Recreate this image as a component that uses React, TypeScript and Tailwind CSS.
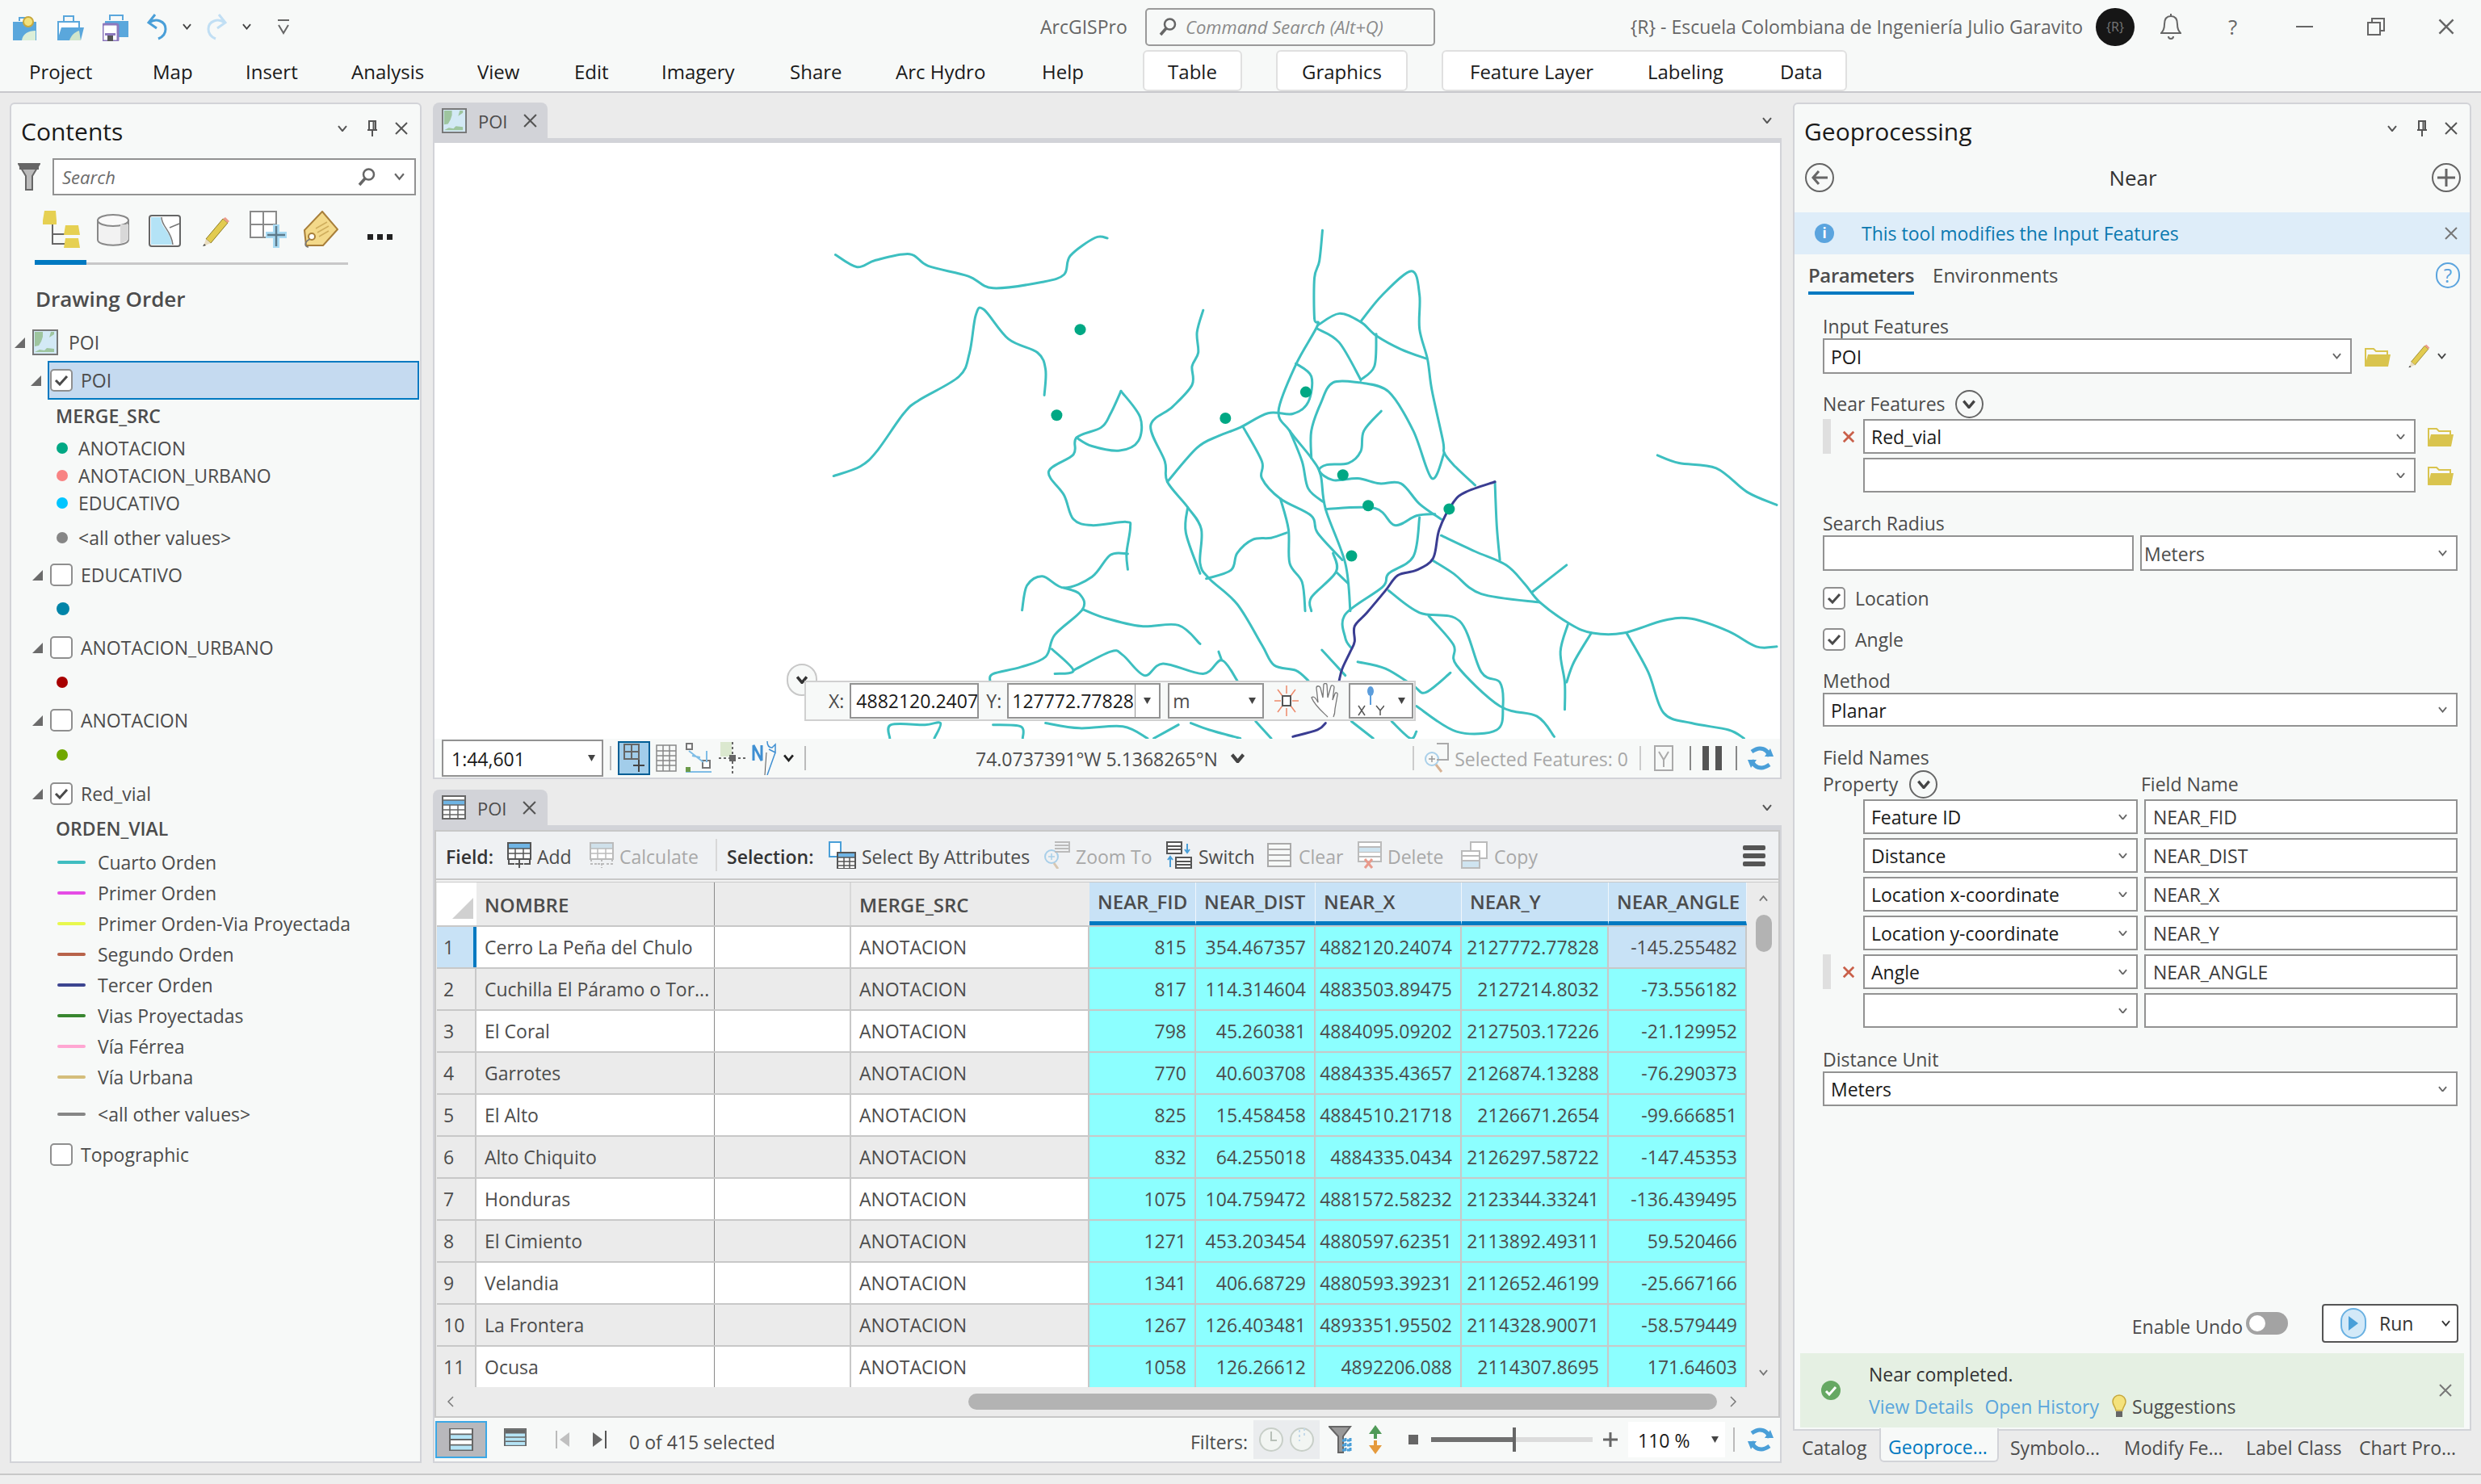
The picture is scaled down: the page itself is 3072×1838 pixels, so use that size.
import React from 'react';

// traced from the map, in crop coordinates (see toX / toY)
const ROADS: number[][] = [
  [45,132,80,168,110,148,165,130,195,165,260,195,300,230,380,212,415,190,425,135,465,82,485,83],
  [42,783,85,755,112,710,155,600,180,560,245,490,262,420,272,310,285,293,325,380,372,420,385,470,383,545],
  [640,295,630,360,632,420,622,460,622,515,590,580,555,635,578,740,582,800,615,875,637,940,635,1040,650,1085,695,1160,735,1280,755,1340,790,1355,810,1385],
  [507,533,490,600,475,640,435,670,430,720,390,770,415,840,430,910,460,928,515,918,522,935,516,1010,518,1058],
  [435,670,460,695,505,708,535,680,538,610,507,533],
  [582,800,630,700,665,665,700,640,745,598,785,600,810,565,815,490,790,452],
  [833,60,828,150,820,200,820,320,825,340,790,455,762,590,780,650,815,730,830,780,838,880,870,1040,878,1180],
  [825,340,860,305,895,330,920,370,960,410,1000,437],
  [895,328,930,250,977,180,990,250,990,350,1003,440,1010,530,1028,680,1030,715,1045,750,1080,810],
  [825,350,860,390,895,500],
  [920,365,917,460,895,500],
  [895,508,850,508,830,570,815,650,815,730],
  [895,508,940,535,980,650,1010,790,1030,715],
  [928,592,900,650,895,710,875,745,840,750,828,768,850,795,890,790,925,805,960,805,990,865,1025,910],
  [780,650,800,740,810,820,835,860],
  [705,640,735,740,735,790,765,850,815,900,825,950,865,1030],
  [765,850,778,940,780,1040,800,1095,805,1180],
  [838,880,918,878,950,928,985,900,1015,895],
  [990,905,980,1020,940,1070,930,1110,870,1190,870,1260,880,1290],
  [775,950,750,965,720,970,695,1010,685,1060,645,1085],
  [615,875,612,950,635,1070],
  [850,1010,855,1065,815,1140,815,1180],
  [855,1065,875,1100],
  [1112,800,1115,930,1120,1030],
  [1025,958,1080,1005,1130,1045,1160,1100,1185,1155,1235,1220,1270,1245,1320,1245,1385,1208,1430,1203,1490,1240,1535,1285,1568,1285],
  [1375,722,1410,745,1470,760,1520,830,1568,868],
  [1010,1030,1045,1070,1090,1130,1185,1155],
  [1172,1125,1228,1045],
  [940,1120,990,1185,1055,1210,1090,1360,1120,1390,1125,1460,1115,1530,1050,1535,985,1460],
  [1005,1195,1045,1280,1050,1340,1120,1460,1180,1490,1208,1550],
  [1230,1220,1218,1300,1225,1390,1225,1470],
  [1268,1245,1240,1330,1228,1390],
  [1325,1245,1360,1360,1385,1480,1430,1510,1490,1530,1515,1555],
  [518,1012,490,1015,460,1080,415,1112,380,1078,355,1105,347,1178],
  [415,1112,440,1130,445,1175,400,1250,385,1315,345,1345,300,1365,295,1385],
  [445,1175,480,1200,540,1225,600,1222,635,1277],
  [395,1292,430,1355,400,1365],
  [430,1355,490,1300,510,1310,545,1370,575,1335,640,1365,670,1325,695,1385],
  [665,1300,670,1325],
  [832,1295,870,1370],
  [890,1330,935,1350,980,1400,1000,1420,1040,1362],
  [133,1555,135,1515,190,1515,215,1510,205,1555],
  [300,1515,345,1520,348,1555],
  [385,1510,440,1525,510,1520,550,1555],
  [600,1515,560,1555],
  [620,1510,650,1530,700,1555],
  [725,1505,750,1555],
  [880,1505,915,1555],
  [945,1505,975,1555,985,1535],
];
const MAIN_ROAD: number[][] = [
  [1112,800,1065,830,1045,860,1022,940,1012,1025,985,1060,955,1075,935,1120,905,1185,885,1225,885,1270,878,1300,865,1350,860,1385],
  [838,1510,825,1530,785,1550],
];
const POINTS = [[441,352],[403,604],[676,613],[806,536],[866,780],[907,870],[1038,880],[880,1018]];

const toX = (x: number) => 1000 + x * 0.7653;
const toY = (y: number) => 260 + y * 0.4209;

function smooth(flat: number[]) {
  const pts: [number, number][] = [];
  for (let i = 0; i < flat.length; i += 2) pts.push([toX(flat[i]), toY(flat[i + 1])]);
  let d = `M${pts[0][0]} ${pts[0][1]}`;
  for (let i = 0; i < pts.length - 1; i++) {
    const a = pts[Math.max(i - 1, 0)], b = pts[i], c = pts[i + 1], e = pts[Math.min(i + 2, pts.length - 1)];
    d += `C${b[0] + (c[0] - a[0]) / 6} ${b[1] + (c[1] - a[1]) / 6} ${c[0] - (e[0] - b[0]) / 6} ${c[1] - (e[1] - b[1]) / 6} ${c[0]} ${c[1]}`;
  }
  return d;
}

const ROWS = [
  ['Cerro La Peña del Chulo', '815', '354.467357', '4882120.24074', '2127772.77828', '-145.255482'],
  ['Cuchilla El Páramo o Tor...', '817', '114.314604', '4883503.89475', '2127214.8032', '-73.556182'],
  ['El Coral', '798', '45.260381', '4884095.09202', '2127503.17226', '-21.129952'],
  ['Garrotes', '770', '40.603708', '4884335.43657', '2126874.13288', '-76.290373'],
  ['El Alto', '825', '15.458458', '4884510.21718', '2126671.2654', '-99.666851'],
  ['Alto Chiquito', '832', '64.255018', '4884335.0434', '2126297.58722', '-147.45353'],
  ['Honduras', '1075', '104.759472', '4881572.58232', '2123344.33241', '-136.439495'],
  ['El Cimiento', '1271', '453.203454', '4880597.62351', '2113892.49311', '59.520466'],
  ['Velandia', '1341', '406.68729', '4880593.39231', '2112652.46199', '-25.667166'],
  ['La Frontera', '1267', '126.403481', '4893351.95502', '2114328.90071', '-58.579449'],
  ['Ocusa', '1058', '126.26612', '4892206.088', '2114307.8695', '171.64603'],
];

const GRID = 'grid grid-cols-[49px_295px_169px_295px_132px_148px_181px_182px_171px]';

function Chev({ size = 12, color = '#555', width = 2 }: { size?: number; color?: string; width?: number }) {
  return (
    <svg width={size} height={size * 0.7} viewBox="0 0 12 8" className="shrink-0">
      <path d="M1 1l5 6 5-6" fill="none" stroke={color} strokeWidth={width} />
    </svg>
  );
}

function CloseX({ size = 18, color = '#555', width = 2 }: { size?: number; color?: string; width?: number }) {
  return (
    <svg width={size} height={size} viewBox="0 0 18 18" className="shrink-0">
      <path d="M2 2l14 14M16 2L2 16" stroke={color} strokeWidth={width} fill="none" />
    </svg>
  );
}

function Pin() {
  return (
    <svg width="14" height="20" viewBox="0 0 14 20" className="shrink-0">
      <path d="M3 1h8v11H3zM1 12h12M7 12v8M8.5 2v9" stroke="#555" strokeWidth="2" fill="none" />
    </svg>
  );
}

function PaneControls({ className = '' }: { className?: string }) {
  return (
    <div className={`flex items-center ${className}`}>
      <Chev />
      <div className="ml-[24px]"><Pin /></div>
      <div className="ml-[20px]"><CloseX /></div>
    </div>
  );
}

function Magnifier({ size = 24, color = '#666' }: { size?: number; color?: string }) {
  return (
    <svg width={size} height={size} viewBox="0 0 24 24" className="shrink-0">
      <circle cx="14.5" cy="9" r="6.5" fill="none" stroke={color} strokeWidth="2.5" />
      <path d="M10 14L3 22" stroke={color} strokeWidth="3.5" />
    </svg>
  );
}

function Folder() {
  return (
    <svg width="33" height="25" viewBox="0 0 33 25" className="shrink-0">
      <path d="M2 24V3h10l3 3h14v4" fill="none" stroke="#d9c44e" strokeWidth="2" />
      <path d="M1 25L5 10h28l-3 15z" fill="#d9c44e" />
    </svg>
  );
}

function Pencil({ size = 38 }: { size?: number }) {
  return (
    <svg width={size} height={size} viewBox="0 0 38 38" className="shrink-0">
      <path d="M7 28L28 3l6 5-21 25z" fill="#e2cb50" stroke="#8d7d25" strokeWidth="1" />
      <path d="M28 3l3-2 5 5-2 2z" fill="#ec9d8c" />
      <path d="M7 28l6 5-9 4z" fill="#e8dcc0" />
      <path d="M3 37l2-3 2 2z" fill="#444" />
    </svg>
  );
}

function Check({ size = 28 }: { size?: number }) {
  return (
    <div className="flex items-center justify-center rounded-[5px] border-2 border-[#8f8f8f] bg-white shrink-0" style={{ width: size, height: size }}>
      <svg width="18" height="14" viewBox="0 0 18 14">
        <path d="M2 7l5 5 9-10" fill="none" stroke="#4a4a4a" strokeWidth="3" />
      </svg>
    </div>
  );
}

function Empty() {
  return <div className="w-[28px] h-[28px] rounded-[5px] border-2 border-[#8f8f8f] bg-white shrink-0" />;
}

function Tri({ color = '#6b6b6b', size = 13 }: { color?: string; size?: number }) {
  return (
    <svg width={size} height={size} viewBox="0 0 13 13" className="shrink-0">
      <polygon points="13,0 13,13 0,13" fill={color} />
    </svg>
  );
}

function MapThumb({ w = 32, h = 32 }: { w?: number; h?: number }) {
  return (
    <svg width={w} height={h} viewBox="0 0 32 32" className="shrink-0">
      <rect x="1" y="1" width="30" height="30" fill="#d3e9f5" stroke="#777" strokeWidth="2" />
      <path d="M3 3h10v6l-2 6-3 5-5 1zM27 3v3l-6 4 2-7zM3 28l6-3 6 1 3-3 9 1v4z" fill="#9ec59f" />
    </svg>
  );
}

function TableGlyph({ size = 30, top = '#6fb4e4', line = '#666' }: { size?: number; top?: string; line?: string }) {
  return (
    <svg width={size} height={size} viewBox="0 0 30 30" className="shrink-0">
      <rect x="1" y="1" width="28" height="28" fill="#fff" stroke={line} strokeWidth="2" />
      <rect x="2" y="6" width="26" height="6" fill={top} />
      <path d="M2 6h26M2 12h26M2 18h26M2 24h26M10 12v17M20 12v17" stroke={line} strokeWidth="1.5" />
    </svg>
  );
}

function AddFieldIcon({ disabled = false }: { disabled?: boolean }) {
  const line = disabled ? '#bbb' : '#555';
  return (
    <svg width="30" height="32" viewBox="0 0 30 32" className="shrink-0">
      <rect x="1" y="1" width="28" height="20" fill="#fff" stroke={line} strokeWidth="2" />
      <rect x="2" y="2" width="26" height="6" fill={disabled ? '#cfe0ea' : '#6fb4e4'} />
      <path d="M2 8h26M2 14h26M10 8v13M20 8v13" stroke={line} strokeWidth="1.5" />
      <path d="M2 21v6h7M28 21v6h-7M15 21v11M10 27h10" stroke={line} strokeWidth="2" strokeDasharray={disabled ? '3 2' : undefined} fill="none" />
    </svg>
  );
}

function SelectAttrIcon() {
  return (
    <svg width="34" height="34" viewBox="0 0 34 34" className="shrink-0">
      <path d="M1 1h14v18H1z" fill="#fff" stroke="#4a9fd8" strokeWidth="2" />
      <rect x="11" y="14" width="22" height="20" fill="#fff" stroke="#555" strokeWidth="2" />
      <rect x="12" y="15" width="20" height="5" fill="#6fb4e4" />
      <path d="M12 20h20M12 25h20M12 30h20M19 20v14M26 20v14" stroke="#555" strokeWidth="1.5" />
    </svg>
  );
}

function ZoomToIcon() {
  return (
    <svg width="32" height="34" viewBox="0 0 32 34" className="shrink-0">
      <circle cx="9" cy="19" r="8" fill="none" stroke="#a8cfe9" strokeWidth="2" />
      <path d="M5 19h8M9 15v8" stroke="#a8cfe9" strokeWidth="1.5" />
      <path d="M12 27l5 7" stroke="#d7c7b2" strokeWidth="3" />
      <path d="M13 1h18v12H13M13 5h18M13 9h18" fill="none" stroke="#bbb" strokeWidth="2" />
    </svg>
  );
}

function SwitchIcon() {
  return (
    <svg width="34" height="34" viewBox="0 0 34 34" className="shrink-0">
      <path d="M2 1h18v14H2zM2 6h18M2 10h18" fill="#fff" stroke="#555" strokeWidth="2" />
      <path d="M13 20h19v13H13zM13 25h19M13 29h19" fill="#fff" stroke="#555" strokeWidth="2" />
      <path d="M27 3v10M24 10l3 4 3-4M6 20v12M3 23l3-4 3 4" fill="none" stroke="#4a9fd8" strokeWidth="2" />
    </svg>
  );
}

function DeleteIcon() {
  return (
    <svg width="30" height="34" viewBox="0 0 30 34" className="shrink-0">
      <path d="M1 1h28v24H1zM1 7h28M1 13h28M1 19h28" fill="#fff" stroke="#bbb" strokeWidth="2" />
      <rect x="2" y="8" width="26" height="5" fill="#cfe4f0" />
      <path d="M9 22l9 11M18 22L9 33" stroke="#e89a8c" strokeWidth="3" />
    </svg>
  );
}

function CopyIcon() {
  return (
    <svg width="34" height="34" viewBox="0 0 34 34" className="shrink-0">
      <path d="M12 1h20v20H12z" fill="#fff" stroke="#bbb" strokeWidth="2" />
      <path d="M1 12h22v21H1z" fill="#fff" stroke="#bbb" strokeWidth="2" />
      <path d="M2 18h20M2 24h20" stroke="#bbb" strokeWidth="2" />
      <rect x="2" y="25" width="20" height="7" fill="#cfe4f0" />
    </svg>
  );
}

function Dropdown({ text, className, dark = true }: { text?: string; className: string; dark?: boolean }) {
  return (
    <div className={`flex items-center justify-between border-2 border-[#929292] bg-white pl-[8px] pr-[11px] text-[23px] ${dark ? 'text-[#1a1a1a]' : 'text-[#4c4c4c]'} ${className}`}>
      <span className="pt-[2px]">{text}</span>
      <Chev size={11} color="#666" />
    </div>
  );
}

function TextBox({ text, className }: { text?: string; className: string }) {
  return <div className={`flex items-center border-2 border-[#929292] bg-white pl-[9px] pt-[2px] text-[23px] text-[#3c3c3c] ${className}`}>{text}</div>;
}

function Label({ text, className = '' }: { text: string; className?: string }) {
  return <div className={`h-[30px] flex items-center text-[23px] text-[#4c4c4c] ${className}`}>{text}</div>;
}

function CircleChev({ className = 'ml-[14px]' }: { className?: string }) {
  return (
    <div className={`w-[35px] h-[35px] rounded-full border-2 border-[#666] flex items-center justify-center ${className}`}>
      <Chev size={16} color="#444" width={2.5} />
    </div>
  );
}

function Swatch({ color }: { color: string }) {
  return <span className="block w-[14px] h-[14px] rounded-full shrink-0" style={{ background: color }} />;
}

function Legend({ color, label, className }: { color: string; label: string; className: string }) {
  return (
    <div className={`flex items-center pl-[56px] ${className}`}>
      <Swatch color={color} />
      <span className="ml-[13px]">{label}</span>
    </div>
  );
}

function LineItem({ color, label, className = 'h-[38px]' }: { color: string; label: string; className?: string }) {
  return (
    <div className={`flex items-center pl-[57px] ${className}`}>
      <span className="block w-[35px] h-[4px] rounded-full shrink-0" style={{ background: color }} />
      <span className="ml-[15px]">{label}</span>
    </div>
  );
}

function Layer({ label, checked = false }: { label: string; checked?: boolean }) {
  return (
    <div className="h-[40px] flex items-center pl-[26px]">
      <Tri />
      <div className="ml-[9px]">{checked ? <Check /> : <Empty />}</div>
      <span className="ml-[10px]">{label}</span>
    </div>
  );
}

function ContentsPane() {
  return (
    <div className="w-[510px] h-full flex flex-col rounded-t-[6px] border-x-2 border-t-2 border-b-2 border-[#d2d3d8] bg-[#f7f9f8] text-[23px] text-[#4c4c4c]">
      <div className="h-[64px] shrink-0 flex items-center justify-between pl-[12px] pr-[14px]">
        <span className="text-[30px] text-[#1a1a1a] pt-[2px]">Contents</span>
        <PaneControls className="pb-[4px]" />
      </div>
      <div className="h-[52px] shrink-0 flex items-center pl-[8px]">
        <svg width="28" height="34" viewBox="0 0 28 34" className="shrink-0">
          <path d="M1 1h26l-9 15v17h-8V16z" fill="#bbb" stroke="#666" strokeWidth="2" />
          <rect x="2" y="2" width="24" height="6" fill="#666" />
        </svg>
        <div className="ml-[15px] w-[450px] h-[46px] border-2 border-[#929292] bg-white flex items-center pl-[10px] pr-[12px]">
          <span className="italic text-[22px] text-[#6b6b6b]">Search</span>
          <div className="ml-auto"><Magnifier size={24} /></div>
          <div className="ml-[22px]"><Chev size={13} color="#666" /></div>
        </div>
      </div>
      <div className="h-[64px] shrink-0 flex items-end pl-[39px] pb-[2px]">
        <svg width="46" height="46" viewBox="0 0 46 46" className="shrink-0">
          <path d="M12 16v25h20M12 29h20" fill="none" stroke="#666" strokeWidth="2" />
          <path d="M2 0h14l1 12H0zM0 12h17v5H0zM28 18h16l2 12H26zM28 34h16l2 12H26z" fill="#e6d052" />
        </svg>
        <svg width="42" height="42" viewBox="0 0 42 42" className="ml-[20px] shrink-0 mb-[1px]">
          <path d="M2 9v24c0 9 38 9 38 0V9z" fill="#f2f2f2" stroke="#888" strokeWidth="2" />
          <ellipse cx="21" cy="9" rx="19" ry="7" fill="#f9f9f9" stroke="#888" strokeWidth="2" />
          <path d="M30 14h10v19l-10 5z" fill="#d8d8d8" />
        </svg>
        <svg width="40" height="40" viewBox="0 0 40 40" className="ml-[23px] shrink-0 mb-[1px]">
          <rect x="1" y="1" width="38" height="38" rx="3" fill="#fff" stroke="#666" strokeWidth="2" />
          <path d="M3 3h12c0 14 12 16 14 34H3z" fill="#b4e3f6" />
          <path d="M16 3c0 12 12 16 14 34M26 16l12-5" fill="none" stroke="#777" strokeWidth="1.5" />
        </svg>
        <div className="ml-[24px] mb-[1px]"><Pencil /></div>
        <svg width="46" height="46" viewBox="0 0 46 46" className="ml-[23px] shrink-0">
          <path d="M1 1h32v32H1zM1 17h32M17 1v32" fill="#fff" stroke="#8a8a8a" strokeWidth="2" />
          <rect x="20" y="26" width="26" height="8" fill="#a8daf3" />
          <rect x="29" y="17" width="8" height="29" fill="#a8daf3" />
          <path d="M22 30h22M33 19v25" stroke="#5d7a8a" strokeWidth="2.5" />
        </svg>
        <svg width="44" height="46" viewBox="0 0 44 46" className="ml-[20px] shrink-0">
          <path d="M24 1l19 22-18 20H4L2 24z" fill="#f3d98a" stroke="#a87f3a" strokeWidth="2" />
          <path d="M16 22l14-8M18 27l14-8M20 32l12-7" stroke="#cfae5d" strokeWidth="1.5" />
          <circle cx="11" cy="32" r="4" fill="#fff" stroke="#a87f3a" strokeWidth="2" />
          <path d="M9 35c-8 4-7 10-2 10" fill="none" stroke="#777" strokeWidth="1.5" />
        </svg>
        <div className="ml-[36px] mb-[10px] flex gap-[5px]">
          <span className="block w-[7px] h-[7px] bg-[#222]" />
          <span className="block w-[7px] h-[7px] bg-[#222]" />
          <span className="block w-[7px] h-[7px] bg-[#222]" />
        </div>
      </div>
      <div className="ml-[29px] mt-[13px] w-[388px] h-[6px] shrink-0 flex items-end bg-gradient-to-b from-transparent from-50% to-[#c8c8c8] to-50%">
        <span className="block w-[64px] h-[6px] bg-[#0079c1]" />
      </div>
      <div className="mt-[27px] h-[30px] pl-[30px] flex items-center text-[26px] font-semibold text-[#4c4c4c]">Drawing Order</div>

      <div className="mt-[22px] h-[34px] flex items-center pl-[4px]">
        <div className="flex items-center"><Tri /></div>
        <div className="ml-[9px]"><MapThumb /></div>
        <span className="ml-[13px]">POI</span>
      </div>
      <div className="mt-[6px] h-[48px] flex items-center pl-[24px]">
        <Tri />
        <div className="ml-[8px] w-[460px] h-[48px] bg-[#c5daf0] border-2 border-[#0079c1] flex items-center pl-[1px]">
          <Check />
          <span className="ml-[10px]">POI</span>
        </div>
      </div>
      <div className="mt-[4px] h-[32px] flex items-center pl-[55px] font-semibold">MERGE_SRC</div>
      <Legend color="#00a884" label="ANOTACION" className="mt-[7px] h-[34px]" />
      <Legend color="#f88383" label="ANOTACION_URBANO" className="h-[34px]" />
      <Legend color="#00c5ff" label="EDUCATIVO" className="h-[34px]" />
      <Legend color="#868686" label="<all other values>" className="mt-[9px] h-[34px]" />
      <div className="mt-[9px]"><Layer label="EDUCATIVO" /></div>
      <div className="h-[44px] flex items-center pl-[56px]"><span className="block w-[16px] h-[16px] rounded-full bg-[#0084a8]" /></div>
      <div className="mt-[6px]"><Layer label="ANOTACION_URBANO" /></div>
      <div className="h-[46px] flex items-center pl-[56px]"><Swatch color="#a80000" /></div>
      <div className="mt-[4px]"><Layer label="ANOTACION" /></div>
      <div className="h-[46px] flex items-center pl-[56px]"><Swatch color="#70a800" /></div>
      <div className="mt-[5px]"><Layer label="Red_vial" checked /></div>
      <div className="mt-[2px] h-[42px] flex items-center pl-[55px] font-semibold">ORDEN_VIAL</div>
      <div className="mt-[2px]">
        <LineItem color="#3fbdc0" label="Cuarto Orden" />
        <LineItem color="#e54ce5" label="Primer Orden" />
        <LineItem color="#e8f84d" label="Primer Orden-Via Proyectada" />
        <LineItem color="#b8634a" label="Segundo Orden" />
        <LineItem color="#3d4590" label="Tercer Orden" />
        <LineItem color="#38862f" label="Vias Proyectadas" />
        <LineItem color="#ffa6d2" label="Vía Férrea" />
        <LineItem color="#d4bd7b" label="Vía Urbana" />
        <LineItem color="#868686" label="<all other values>" className="mt-[8px] h-[38px]" />
      </div>
      <div className="mt-[11px] h-[40px] flex items-center pl-[48px]">
        <Empty />
        <span className="ml-[10px]">Topographic</span>
      </div>
    </div>
  );
}

function PaneTab({ icon }: { icon: React.ReactNode }) {
  return (
    <div className="h-[44px] shrink-0 flex items-start justify-between">
      <div className="w-[142px] h-[44px] rounded-t-[8px] bg-[#d2d3d8] flex items-center pl-[11px]">
        {icon}
        <span className="ml-[14px] text-[22px] text-[#4c4c4c] pt-[3px]">POI</span>
        <div className="ml-[18px]"><CloseX size={19} /></div>
      </div>
    </div>
  );
}

function MapPane() {
  return (
    <div className="shrink-0 flex flex-col">
      <div className="flex justify-between">
        <PaneTab icon={<MapThumb w={31} h={31} />} />
        <div className="pt-[18px] pr-[12px]"><Chev /></div>
      </div>
      <div className="h-[6px] bg-[#d2d3d8]" />
      <div className="border-x-2 border-[#d2d3d8] relative h-[738px] bg-white">
        <svg width="1666" height="738" viewBox="538 177 1666 738" className="block">
          {ROADS.map((r, i) => (
            <path key={i} d={smooth(r)} fill="none" stroke="#3dbfc0" strokeWidth="3" strokeLinecap="round" strokeLinejoin="round" />
          ))}
          {MAIN_ROAD.map((r, i) => (
            <path key={i} d={smooth(r)} fill="none" stroke="#3a3d92" strokeWidth="3" strokeLinecap="round" strokeLinejoin="round" />
          ))}
          {POINTS.map((p, i) => (
            <circle key={i} cx={toX(p[0])} cy={toY(p[1])} r="7" fill="#00a884" />
          ))}
        </svg>
        <div className="absolute left-[436px] top-[645px] w-[38px] h-[40px] rounded-full border-2 border-[#c8c8c8] bg-[#f7f9f8] flex items-center justify-center">
          <Chev size={14} color="#333" width={3} />
        </div>
        <div className="absolute left-[458px] top-[666px] w-[757px] h-[50px] border-2 border-[#d0d0d0] bg-[#f7f9f8] flex items-center pl-[28px] text-[23px] text-[#4c4c4c]">
          <span>X:</span>
          <div className="ml-[7px] w-[160px] h-[44px] border-2 border-[#929292] bg-white flex items-center pl-[6px] text-[#1a1a1a] overflow-hidden whitespace-nowrap">4882120.2407</div>
          <span className="ml-[9px]">Y:</span>
          <div className="ml-[7px] w-[190px] h-[44px] border-2 border-[#929292] bg-white flex items-center pl-[4px] text-[#1a1a1a]">
            <span>127772.77828</span>
            <span className="ml-auto h-full w-[30px] border-l border-[#929292] flex items-center justify-center"><DownTri /></span>
          </div>
          <div className="ml-[9px] w-[119px] h-[44px] border-2 border-[#929292] bg-white flex items-center pl-[4px] pr-[8px]">
            <span>m</span>
            <span className="ml-auto"><DownTri /></span>
          </div>
          <svg width="32" height="40" viewBox="0 0 32 40" className="ml-[12px] shrink-0">
            <path d="M16 1v10M16 29v10M1 20h8M23 20h8M5 6l6 8M27 6l-6 8M5 34l6-8M27 34l-6-8" stroke="#ee8a6b" strokeWidth="1.5" />
            <rect x="11" y="14" width="10" height="12" fill="#fff" stroke="#555" strokeWidth="2" />
          </svg>
          <svg width="36" height="44" viewBox="0 0 36 44" className="ml-[13px] shrink-0">
            <path d="M22 42c-6-6-16-14-20-24 3-3 6 2 8 6L8 6c0-3 4-3 5 0l3 12 1-16c0-2 4-2 4 0l1 16 4-14c1-2 4-1 4 1l-2 16 3-8c1-2 4-1 3 2l-3 17c0 4-1 8-2 10" fill="#fff" stroke="#777" strokeWidth="1.3" />
          </svg>
          <div className="ml-[12px] w-[80px] h-[44px] border-2 border-[#929292] bg-white flex items-center pl-[8px] pr-[8px] relative">
            <svg width="34" height="38" viewBox="0 0 34 38" className="shrink-0">
              <ellipse cx="17" cy="7" rx="4" ry="6" fill="#5b9ddc" />
              <path d="M17 12v12" stroke="#5b9ddc" strokeWidth="2" />
              <path d="M2 25l8 12M10 25L2 37M24 25l5 6 5-6M29 31v6" stroke="#555" strokeWidth="1.5" fill="none" />
            </svg>
            <span className="ml-auto"><DownTri /></span>
          </div>
        </div>
      </div>
      <div className="h-[50px] shrink-0 border-x-2 border-b-2 border-[#d2d3d8] bg-[#f7f9f8] flex items-center pl-[9px] text-[23px]">
        <div className="w-[200px] h-[46px] border-2 border-[#929292] bg-white flex items-center pl-[10px] pr-[8px] text-[#1a1a1a]">
          <span className="pt-[2px]">1:44,601</span>
          <span className="ml-auto"><DownTri /></span>
        </div>
        <span className="ml-[8px] w-[2px] h-[30px] bg-[#bbb]" />
        <div className="ml-[8px] w-[40px] h-[42px] bg-[#a2cdea] border-2 border-[#005e95] flex items-center justify-center">
          <svg width="26" height="36" viewBox="0 0 26 36">
            <path d="M1 1h18v18H1zM1 10h18M10 1v18" fill="none" stroke="#666" strokeWidth="2" />
            <path d="M12 27h14M19 20v15" stroke="#444" strokeWidth="2" />
          </svg>
        </div>
        <div className="ml-[7px]">
          <svg width="26" height="34" viewBox="0 0 26 34" className="shrink-0">
            <path d="M1 1h24v32H1zM1 8h24M1 14h24M1 20h24M1 26h24M9 1v32M17 1v32" fill="none" stroke="#888" strokeWidth="1.5" />
          </svg>
        </div>
        <svg width="34" height="38" viewBox="0 0 34 38" className="ml-[10px] shrink-0">
          <path d="M2 1h7v7H2zM22 22h9v9h-9z" fill="#fff" stroke="#777" strokeWidth="2" />
          <path d="M1 36h32M5 10l18 14M27 10v14M9 16l10 2" stroke="#7fbde6" strokeWidth="2" />
          <rect x="1" y="30" width="6" height="6" fill="#6c9b4a" />
        </svg>
        <svg width="34" height="40" viewBox="0 0 34 40" className="ml-[8px] shrink-0">
          <rect x="2" y="0" width="14" height="18" fill="#dbe8cf" />
          <path d="M17 0v40M0 20h34" stroke="#666" strokeWidth="2" strokeDasharray="3 3" />
          <rect x="13" y="16" width="8" height="8" fill="#666" />
        </svg>
        <svg width="36" height="42" viewBox="0 0 36 42" className="ml-[6px] shrink-0">
          <path d="M3 24V5l10 19V5" fill="none" stroke="#3f8fd2" strokeWidth="3" />
          <path d="M30 14L20 42M20 0c0 6 3 8 6 8l4-4v10l-8-4" fill="none" stroke="#3f8fd2" strokeWidth="1.5" />
          <path d="M19 14l-2 28" stroke="#555" strokeWidth="1" />
        </svg>
        <div className="ml-[4px]"><Chev size={13} color="#222" width={2.5} /></div>
        <span className="ml-[13px] w-[2px] h-[30px] bg-[#bbb]" />
        <span className="ml-[210px] text-[#4c4c4c] whitespace-nowrap pt-[2px]">74.0737391°W 5.1368265°N</span>
        <div className="ml-[16px]"><Chev size={17} color="#444" width={3} /></div>
        <span className="ml-auto w-[2px] h-[30px] bg-[#ccc]" />
        <div className="ml-[12px] h-[44px] flex items-center text-[#a8a8a8]">
          <svg width="34" height="38" viewBox="0 0 34 38" className="shrink-0">
            <circle cx="10" cy="20" r="8" fill="none" stroke="#a8cfe9" strokeWidth="2" />
            <path d="M6 20h8M10 16v8" stroke="#999" strokeWidth="1.5" />
            <path d="M15 27l7 9" stroke="#d7b294" strokeWidth="3" />
            <path d="M16 1h14v20H16" fill="none" stroke="#aaa" strokeWidth="2" />
          </svg>
          <span className="ml-[4px] pt-[2px] whitespace-nowrap">Selected Features: 0</span>
        </div>
        <span className="ml-[14px] w-[2px] h-[30px] bg-[#ccc]" />
        <svg width="24" height="32" viewBox="0 0 24 32" className="ml-[16px] shrink-0">
          <path d="M1 1h22v30H1zM6 8l6 10 6-10M12 18v9" fill="none" stroke="#aaa" strokeWidth="2" />
        </svg>
        <span className="ml-[20px] w-[2px] h-[30px] bg-[#888]" />
        <span className="ml-[14px] w-[8px] h-[30px] bg-[#555]" />
        <span className="ml-[8px] w-[8px] h-[30px] bg-[#555]" />
        <span className="ml-[17px] w-[2px] h-[30px] bg-[#888]" />
        <div className="ml-[13px] mr-[8px]"><Refresh /></div>
      </div>
    </div>
  );
}

function DownTri() {
  return (
    <svg width="9" height="8" viewBox="0 0 9 8" className="block shrink-0">
      <polygon points="0,0 9,0 4.5,8" fill="#444" />
    </svg>
  );
}

function Refresh() {
  return (
    <svg width="32" height="32" viewBox="0 0 32 32" className="shrink-0">
      <path d="M27 14c-1-6-6-10-12-10C11 4 8 6 5 8" fill="none" stroke="#4a9fd8" strokeWidth="5" />
      <polygon points="21,14 32,14 28,4" fill="#4a9fd8" />
      <path d="M5 18c1 6 6 10 12 10 4 0 7-2 10-4" fill="none" stroke="#4a9fd8" strokeWidth="5" />
      <polygon points="0,18 11,18 4,28" fill="#4a9fd8" />
    </svg>
  );
}

function Tool({ icon, label, disabled, className = '' }: { icon: React.ReactNode; label: string; disabled?: boolean; className?: string }) {
  return (
    <div className={`flex items-center whitespace-nowrap ${className}`}>
      {icon}
      <span className={`ml-[7px] pt-[5px] ${disabled ? 'text-[#a8a8a8]' : 'text-[#4c4c4c]'}`}>{label}</span>
    </div>
  );
}

function ListGlyph({ color = '#aaa', accent = '#cbe4f2' }: { color?: string; accent?: string }) {
  return (
    <svg width="32" height="30" viewBox="0 0 32 30" className="shrink-0">
      <rect x="1" y="1" width="28" height="28" fill={accent} stroke={color} strokeWidth="2" />
      <path d="M1 8h28M1 15h28M1 22h28" stroke={color} strokeWidth="2" />
    </svg>
  );
}

function TablePane() {
  return (
    <div className="flex-1 min-h-0 flex flex-col mt-[13px]">
      <div className="flex justify-between">
        <PaneTab icon={<TableGlyph size={30} />} />
        <div className="pt-[18px] pr-[12px]"><Chev /></div>
      </div>
      <div className="h-[6px] shrink-0 bg-[#d2d3d8]" />
      <div className="flex-1 flex flex-col border-x-2 border-b-2 border-[#d2d3d8] bg-[#f7f9f8]">
        <div className="h-[728px] shrink-0 border-2 border-[#c8c8c8] flex flex-col bg-[#ebebeb]">
          <div className="h-[58px] shrink-0 bg-[#eff1f3] flex items-center pl-[12px] pr-[10px] text-[23px]">
            <span className="font-semibold text-[#333] w-[76px] pt-[5px]">Field:</span>
            <Tool icon={<AddFieldIcon />} label="Add" className="w-[102px]" />
            <Tool icon={<AddFieldIcon disabled />} label="Calculate" disabled className="w-[156px]" />
            <span className="w-[2px] h-[40px] bg-[#d8d8d8]" />
            <span className="ml-[12px] font-semibold text-[#333] w-[126px] pt-[5px]">Selection:</span>
            <Tool icon={<SelectAttrIcon />} label="Select By Attributes" className="w-[267px]" />
            <Tool icon={<ZoomToIcon />} label="Zoom To" disabled className="w-[150px]" />
            <Tool icon={<SwitchIcon />} label="Switch" className="w-[126px]" />
            <Tool icon={<ListGlyph accent="#f7f9f8" />} label="Clear" disabled className="w-[112px]" />
            <Tool icon={<DeleteIcon />} label="Delete" disabled className="w-[128px]" />
            <Tool icon={<CopyIcon />} label="Copy" disabled />
            <div className="ml-auto flex flex-col gap-[4px] mr-[6px] pt-[2px]">
              <span className="block w-[28px] h-[6px] rounded-[2px] bg-[#555]" />
              <span className="block w-[28px] h-[6px] rounded-[2px] bg-[#555]" />
              <span className="block w-[28px] h-[6px] rounded-[2px] bg-[#555]" />
            </div>
          </div>
          <div className="h-[2px] shrink-0 bg-[#c8c8c8]" />
          <div className="h-[3px] shrink-0 bg-[#f3f3f3] border-b border-[#c8c8c8]" />
          <div className="flex-1 flex min-h-0 text-[23px] text-[#4c4c4c]">
            <div className="w-[1622px] ml-[1px] shrink-0">
              <div className={`${GRID} h-[53px] font-semibold text-[24px] text-[#4c4c4c]`}>
                <div className="bg-white flex items-end justify-end pr-[4px] pb-[8px]"><Tri color="#d0d0d0" size={26} /></div>
                <div className="bg-[#ebebeb] flex items-center pl-[10px] pt-[2px] border-r border-[#8a8a8a]">NOMBRE</div>
                <div className="bg-[#ebebeb] border-r-2 border-[#d8d8d8]" />
                <div className="bg-[#ebebeb] flex items-center pl-[10px] pt-[2px]">MERGE_SRC</div>
                {['NEAR_FID', 'NEAR_DIST', 'NEAR_X', 'NEAR_Y', 'NEAR_ANGLE'].map(h => (
                  <div key={h} className="bg-[#c8e2f6] border-b-[5px] border-[#0079c1] border-r border-r-[#f0f6fb] flex items-center pl-[10px] whitespace-nowrap">{h}</div>
                ))}
              </div>
              {ROWS.map((row, i) => (
                <div key={i} className={`${GRID} h-[52px] border-t-2 border-[#c8c8c8] ${i % 2 ? 'bg-[#ebebeb]' : 'bg-white'}`}>
                  <div className={`flex items-center pl-[8px] ${i === 0 ? 'bg-[#c8e2f6] border-r-4 border-[#0079c1]' : 'bg-[#ebebeb] border-r-2 border-[#c8c8c8]'}`}>{i + 1}</div>
                  <div className="flex items-center pl-[10px] border-r border-[#8a8a8a] whitespace-nowrap overflow-hidden">{row[0]}</div>
                  <div className="border-r-2 border-[#c8c8c8]" />
                  <div className="flex items-center pl-[10px] border-r-2 border-[#c8c8c8]">ANOTACION</div>
                  {row.slice(1).map((v, j) => (
                    <div key={j} className={`flex items-center justify-end pr-[10px] border-r-2 border-[#c8c8c8] whitespace-nowrap ${i === 0 && j === 4 ? 'bg-[#c8e2f6]' : 'bg-[#8cffff]'}`}>{v}</div>
                  ))}
                </div>
              ))}
            </div>
            <div className="flex-1 flex flex-col items-center pt-[16px] pl-[2px]">
              <div className="rotate-180"><Chev size={11} color="#777" /></div>
              <div className="mt-[16px] w-[20px] h-[46px] rounded-full bg-[#b3b3b3]" />
              <div className="mt-auto mb-[14px]"><Chev size={11} color="#777" /></div>
            </div>
          </div>
          <div className="h-[36px] shrink-0 flex items-center pl-[14px]">
            <svg width="8" height="14" viewBox="0 0 8 14"><path d="M7 1L1 7l6 6" fill="none" stroke="#777" strokeWidth="1.5" /></svg>
            <span className="ml-[637px] w-[927px] h-[20px] rounded-full bg-[#b3b3b3]" />
            <svg width="8" height="14" viewBox="0 0 8 14" className="ml-[16px]"><path d="M1 1l6 6-6 6" fill="none" stroke="#777" strokeWidth="1.5" /></svg>
          </div>
        </div>
        <div className="flex-1 flex items-center text-[23px] text-[#4c4c4c] pl-[1px]">
          <div className="w-[64px] h-[46px] bg-[#b8b8bc] border-2 border-[#3ba7e5] flex items-center justify-center">
            <RowsIcon alt />
          </div>
          <div className="ml-[21px] mb-[6px]"><RowsIcon small /></div>
          <svg width="18" height="22" viewBox="0 0 18 22" className="ml-[36px] shrink-0">
            <path d="M1 0v22" stroke="#bbb" strokeWidth="2" />
            <polygon points="17,2 5,11 17,20" fill="#c0c0c0" />
          </svg>
          <svg width="18" height="22" viewBox="0 0 18 22" className="ml-[27px] shrink-0">
            <path d="M17 0v22" stroke="#555" strokeWidth="2" />
            <polygon points="1,2 13,11 1,20" fill="#666" />
          </svg>
          <span className="ml-[28px] pt-[6px] whitespace-nowrap">0 of 415 selected</span>
          <span className="ml-auto pt-[6px] whitespace-nowrap">Filters:</span>
          <div className="ml-[7px] w-[82px] h-[48px] bg-[#eaecee] flex items-center justify-center gap-[8px]">
            <svg width="30" height="34" viewBox="0 0 30 34"><circle cx="15" cy="17" r="14" fill="#f2f5f2" stroke="#c8cfc8" strokeWidth="2" /><path d="M15 7v11h7" stroke="#b8c0b8" strokeWidth="2" fill="none" /></svg>
            <svg width="30" height="34" viewBox="0 0 30 34"><circle cx="15" cy="17" r="14" fill="#f2f5f2" stroke="#c8cfc8" strokeWidth="2" /><path d="M12 5v14M18 3v12" stroke="#c3d9ea" strokeWidth="2" strokeDasharray="3 3" /></svg>
          </div>
          <svg width="30" height="34" viewBox="0 0 30 34" className="ml-[11px] shrink-0">
            <path d="M1 1h26l-9 12v20h-6V13z" fill="#999" stroke="#666" strokeWidth="2" />
            <path d="M21 15v18M27 15v18M17 18h12M17 24h12M17 30h12" stroke="#4a9fd8" strokeWidth="3" strokeDasharray="4 2" />
          </svg>
          <svg width="18" height="36" viewBox="0 0 18 36" className="ml-[19px] shrink-0">
            <polygon points="9,0 17,11 1,11" fill="#4f9a57" />
            <path d="M9 10v7" stroke="#4f9a57" strokeWidth="4" />
            <polygon points="9,36 17,25 1,25" fill="#e59a3c" />
            <path d="M9 19v7" stroke="#e59a3c" strokeWidth="4" />
          </svg>
          <span className="ml-[32px] w-[12px] h-[12px] bg-[#666]" />
          <div className="ml-[16px] flex items-center relative w-[200px]">
            <span className="w-[103px] h-[6px] bg-[#707070] block" />
            <span className="w-[97px] h-[6px] bg-[#dcdcdc] block" />
            <span className="absolute left-[101px] -top-[12px] w-[4px] h-[30px] bg-[#666]" />
          </div>
          <svg width="18" height="18" viewBox="0 0 18 18" className="ml-[13px] shrink-0"><path d="M0 9h18M9 0v18" stroke="#666" strokeWidth="3" /></svg>
          <div className="ml-[13px] w-[120px] h-[44px] bg-white flex items-center pl-[12px] pr-[8px] text-[#1a1a1a]">
            <span className="pt-[2px]">110 %</span>
            <span className="ml-auto"><DownTri /></span>
          </div>
          <span className="ml-[10px] w-[2px] h-[30px] bg-[#bbb]" />
          <div className="ml-[16px] mr-[8px]"><Refresh /></div>
        </div>
      </div>
    </div>
  );
}

function RowsIcon({ alt = false, small = false }: { alt?: boolean; small?: boolean }) {
  return (
    <svg width={small ? 28 : 30} height={small ? 22 : 28} viewBox="0 0 30 38" preserveAspectRatio="none" className="shrink-0">
      <rect x="1" y="1" width="28" height="36" fill="#b5e4f6" stroke="#666" strokeWidth="2" />
      <rect x="2" y="2" width="26" height="8" fill={alt ? '#fff' : '#666'} />
      <rect x="2" y="19" width="26" height="9" fill={alt ? '#fff' : '#b5e4f6'} />
      <path d="M2 10h26M2 19h26M2 28h26" stroke="#666" strokeWidth="2.5" />
    </svg>
  );
}

function RemoveX() {
  return <CloseX size={16} color="#c9604a" width={3} />;
}

function GeoprocessingPane() {
  const props = [
    ['Feature ID', 'NEAR_FID'],
    ['Distance', 'NEAR_DIST'],
    ['Location x-coordinate', 'NEAR_X'],
    ['Location y-coordinate', 'NEAR_Y'],
    ['Angle', 'NEAR_ANGLE'],
    ['', ''],
  ];
  return (
    <div className="w-[840px] h-full flex flex-col">
      <div className="h-[1645px] flex flex-col rounded-t-[6px] border-2 border-[#d2d3d8] bg-[#f7f9f8] text-[23px] text-[#4c4c4c]">
        <div className="h-[60px] shrink-0 flex items-center justify-between pl-[12px] pr-[14px]">
          <span className="text-[30px] text-[#1a1a1a] pt-[6px]">Geoprocessing</span>
          <PaneControls />
        </div>
        <div className="h-[62px] shrink-0 flex items-center justify-between pl-[13px] pr-[11px]">
          <div className="w-[36px] h-[36px] rounded-full border-2 border-[#666] flex items-center justify-center">
            <svg width="20" height="18" viewBox="0 0 20 18"><path d="M9 1L2 9l7 8M2 9h18" fill="none" stroke="#666" strokeWidth="3" /></svg>
          </div>
          <span className="text-[26px] text-[#333]">Near</span>
          <div className="w-[36px] h-[36px] rounded-full border-2 border-[#666] flex items-center justify-center">
            <svg width="22" height="22" viewBox="0 0 22 22"><path d="M0 11h22M11 0v22" stroke="#666" strokeWidth="3" /></svg>
          </div>
        </div>
        <div className="mt-[12px] h-[52px] shrink-0 bg-[#deedf9] flex items-center pl-[25px] pr-[14px]">
          <div className="w-[24px] h-[24px] rounded-full bg-[#5ba4de] text-white text-[17px] font-bold flex items-center justify-center">i</div>
          <span className="ml-[34px] pt-[1px] text-[#0b79b0]">This tool modifies the Input Features</span>
          <div className="ml-auto"><CloseX size={18} color="#777" /></div>
        </div>
        <div className="h-[50px] shrink-0 flex pl-[17px] pr-[12px] pt-[8px] text-[24px]">
          <div className="h-[42px] border-b-4 border-[#0079c1] font-semibold tracking-[-0.4px] text-[#4c4c4c]">Parameters</div>
          <span className="ml-[23px]">Environments</span>
          <div className="ml-auto mt-[2px] w-[30px] h-[32px] rounded-full border-2 border-[#5ba4de] text-[#5ba4de] flex items-center justify-center">?</div>
        </div>

        <div className="flex-1 flex flex-col pl-[35px] pr-[15px]">
          <Label text="Input Features" className="mt-[25px] !h-[29px]" />
          <div className="flex items-center">
            <Dropdown text="POI" className="w-[655px] h-[44px]" />
            <div className="ml-[15px]"><Folder /></div>
            <div className="ml-[20px]"><Pencil size={30} /></div>
            <div className="ml-[8px]"><Chev size={11} color="#444" /></div>
          </div>
          <div className="mt-[21px] h-[33px] flex items-center">
            <span>Near Features</span>
            <CircleChev className="ml-[12px]" />
          </div>
          <div className="mt-[2px] flex items-center h-[43px]">
            <span className="w-[10px] h-[43px] bg-[#dfdfdf]" />
            <div className="ml-[14px] w-[26px]"><RemoveX /></div>
            <Dropdown text="Red_vial" className="w-[684px] h-[43px]" />
            <div className="ml-[14px]"><Folder /></div>
          </div>
          <div className="mt-[5px] flex items-center h-[43px] pl-[50px]">
            <Dropdown className="w-[684px] h-[43px]" />
            <div className="ml-[14px]"><Folder /></div>
          </div>
          <Label text="Search Radius" className="mt-[23px]" />
          <div className="flex h-[44px] gap-[8px]">
            <TextBox className="w-[385px]" />
            <Dropdown text="Meters" dark={false} className="flex-1 !pl-[3px]" />
          </div>
          <div className="mt-[20px] h-[28px] flex items-center">
            <Check />
            <span className="ml-[12px]">Location</span>
          </div>
          <div className="mt-[23px] h-[28px] flex items-center">
            <Check />
            <span className="ml-[12px]">Angle</span>
          </div>
          <Label text="Method" className="mt-[22px]" />
          <Dropdown text="Planar" className="h-[42px]" />
          <Label text="Field Names" className="mt-[23px]" />
          <div className="mt-[2px] h-[33px] flex items-center">
            <div className="w-[394px] flex items-center">
              <span>Property</span>
              <CircleChev />
            </div>
            <span>Field Name</span>
          </div>
          <div className="mt-[2px] flex flex-col gap-[5px]">
            {props.map((p, i) => (
              <div key={i} className="flex h-[43px] items-center">
                <div className="w-[50px] h-full flex items-center">
                  {p[0] === 'Angle' && (
                    <>
                      <span className="w-[10px] h-[43px] bg-[#dfdfdf]" />
                      <div className="ml-[14px]"><RemoveX /></div>
                    </>
                  )}
                </div>
                <Dropdown text={p[0]} className="w-[340px] h-full" />
                <TextBox text={p[1]} className="ml-[8px] flex-1 h-full" />
              </div>
            ))}
          </div>
          <Label text="Distance Unit" className="mt-[24px]" />
          <Dropdown text="Meters" className="h-[43px]" />

          <div className="mt-auto flex items-center justify-end h-[48px] -mr-[1px]">
            <span className="pt-[9px]">Enable Undo</span>
            <div className="ml-[4px] w-[52px] h-[28px] rounded-full bg-[#a3a3a3] flex items-center">
              <span className="block w-[24px] h-[24px] ml-[2px] rounded-full bg-white border-2 border-[#a3a3a3]" />
            </div>
            <div className="ml-[42px] w-[169px] h-[48px] rounded-[4px] border-2 border-[#555] bg-white flex items-center pl-[21px] pr-[8px] text-[#333]">
              <div className="w-[32px] h-[38px] rounded-full bg-[#d3e9f8] border-2 border-[#6ab1e2] flex items-center justify-center">
                <svg width="12" height="18" viewBox="0 0 12 18"><polygon points="0,0 12,9 0,18" fill="#4a9fd8" /></svg>
              </div>
              <span className="ml-[16px]">Run</span>
              <div className="ml-auto"><Chev size={11} color="#333" /></div>
            </div>
          </div>
        </div>
        <div className="mx-[7px] mt-[13px] mb-[2px] h-[92px] shrink-0 bg-[#e5f0e3] flex items-center pl-[26px] pr-[14px]">
          <div className="w-[24px] h-[24px] rounded-full bg-[#66a863] flex items-center justify-center">
            <svg width="16" height="13" viewBox="0 0 16 13"><path d="M2 7l4 4 8-9" fill="none" stroke="#fff" strokeWidth="3" /></svg>
          </div>
          <div className="ml-[35px] flex flex-col">
            <span className="h-[40px] flex items-center text-[#333]">Near completed.</span>
            <div className="flex items-center h-[40px]">
              <span className="text-[#5aa6dc]">View Details</span>
              <span className="ml-[14px] text-[#5aa6dc]">Open History</span>
              <svg width="18" height="30" viewBox="0 0 18 30" className="ml-[16px]">
                <path d="M9 1c-5 0-8 4-8 8 0 4 3 6 4 11h8c1-5 4-7 4-11 0-4-3-8-8-8z" fill="#f4e27c" stroke="#c7a83c" strokeWidth="1.5" />
                <rect x="5" y="21" width="8" height="7" fill="#666" />
              </svg>
              <span className="ml-[7px]">Suggestions</span>
            </div>
          </div>
          <div className="ml-auto"><CloseX size={18} color="#777" /></div>
        </div>
      </div>
      <div className="h-[40px] -mt-[2px] flex text-[23px] text-[#4c4c4c] whitespace-nowrap">
        <div className="pl-[11px] w-[107px] flex items-center pt-[6px]">Catalog</div>
        <div className="w-[148px] h-[42px] -mt-[1px] bg-[#f7f9f8] rounded-b-[6px] border-x-2 border-b-2 border-[#d2d3d8] pl-[9px] flex items-center pt-[6px] text-[#0079c1]">Geoproce...</div>
        <div className="ml-[14px] w-[141px] flex items-center pt-[6px]">Symbolo...</div>
        <div className="w-[151px] flex items-center pt-[6px]">Modify Fe...</div>
        <div className="w-[140px] flex items-center pt-[6px]">Label Class</div>
        <div className="flex items-center pt-[6px]">Chart Pro...</div>
      </div>
    </div>
  );
}

function TopBar() {
  return (
    <div className="h-[62px] shrink-0 flex items-center pt-[4px] bg-[#f7f9f8]">
      <div className="w-[1288px] shrink-0 flex items-center pl-[15px]">
        <svg width="32" height="34" viewBox="0 0 32 34" className="shrink-0">
          <path d="M1 11h29v23H1z" fill="#5aa7dc" />
          <path d="M9 10V6h14v4" fill="none" stroke="#5aa7dc" strokeWidth="2" />
          <path d="M12 34c1-8 8-12 17-12v12z" fill="#dcefd8" />
          <circle cx="20" cy="11" r="6" fill="#f4e27c" stroke="#c9a93c" strokeWidth="2" />
        </svg>
        <svg width="34" height="34" viewBox="0 0 34 34" className="ml-[23px] shrink-0">
          <path d="M2 11h26v23H2z" fill="#fff" stroke="#5aa7dc" strokeWidth="2" />
          <path d="M9 10V4h12v6" fill="none" stroke="#5aa7dc" strokeWidth="2" />
          <path d="M1 34l5-16h28l-4 16z" fill="#5aa7dc" />
          <path d="M16 34c2-6 6-10 12-12l2 12z" fill="#cfe5cb" />
        </svg>
        <svg width="33" height="36" viewBox="0 0 33 36" className="ml-[23px] shrink-0">
          <path d="M3 11h29v20H3z" fill="#5aa7dc" />
          <path d="M9 10V4h16v6" fill="none" stroke="#5aa7dc" strokeWidth="2" />
          <rect x="0" y="15" width="19" height="21" rx="2" fill="#fff" stroke="#8d79bd" strokeWidth="3" />
          <rect x="3" y="26" width="13" height="3" fill="#8d79bd" />
          <rect x="6" y="29" width="7" height="7" fill="#555" />
        </svg>
        <svg width="28" height="34" viewBox="0 0 28 34" className="ml-[21px] shrink-0">
          <path d="M4 12c8-6 20-2 20 8 0 6-4 10-9 12" fill="none" stroke="#4a9fd8" strokeWidth="3" />
          <polyline points="11,2 3,12 13,19" fill="none" stroke="#4a9fd8" strokeWidth="3" />
        </svg>
        <div className="ml-[17px]"><Chev size={11} color="#444" /></div>
        <svg width="28" height="34" viewBox="0 0 28 34" className="ml-[17px] shrink-0">
          <path d="M24 12c-8-6-20-2-20 8 0 6 4 10 9 12" fill="none" stroke="#c1dff4" strokeWidth="3" />
          <polyline points="17,2 25,12 15,19" fill="none" stroke="#c1dff4" strokeWidth="3" />
        </svg>
        <div className="ml-[18px]"><Chev size={11} color="#444" /></div>
        <svg width="16" height="20" viewBox="0 0 16 20" className="ml-[32px] shrink-0">
          <path d="M1 2h14M2 8l6 10 6-10" fill="none" stroke="#666" strokeWidth="2" />
        </svg>
      </div>
      <span className="w-[130px] shrink-0 text-[23px] text-[#666]">ArcGISPro</span>
      <div className="w-[359px] h-[47px] shrink-0 rounded-[5px] border-2 border-[#9a9a9a] flex items-center pl-[14px]">
        <Magnifier size={24} />
        <span className="ml-[10px] italic text-[22px] text-[#8a8a8a] whitespace-nowrap">Command Search (Alt+Q)</span>
      </div>
      <span className="flex-1 text-right text-[23px] text-[#666] whitespace-nowrap">{'{R} - Escuela Colombiana de Ingeniería Julio Garavito'}</span>
      <div className="ml-[16px] w-[48px] h-[47px] rounded-full bg-[#161616] flex items-center justify-center text-[16px] text-[#777]">{'{R}'}</div>
      <svg width="26" height="34" viewBox="0 0 26 34" className="ml-[32px] shrink-0">
        <path d="M13 4c-6 0-8 5-8 10 0 6-2 9-4 11h24c-2-2-4-5-4-11 0-5-2-10-8-10zM13 1v3M10 29a3 3 0 006 0" fill="none" stroke="#666" strokeWidth="2" />
      </svg>
      <span className="ml-[58px] w-[16px] text-[26px] text-[#666]">?</span>
      <span className="ml-[68px] w-[21px] h-[2px] bg-[#666]" />
      <svg width="22" height="22" viewBox="0 0 22 22" className="ml-[67px] shrink-0">
        <path d="M1 6h15v15H1zM6 5V1h15v15h-4" fill="none" stroke="#666" strokeWidth="2" />
      </svg>
      <div className="ml-[65px] mr-[32px]"><CloseX size={22} color="#666" /></div>
    </div>
  );
}

function RibbonTabs() {
  const tabs = ['Project', 'Map', 'Insert', 'Analysis', 'View', 'Edit', 'Imagery', 'Share', 'Arc Hydro', 'Help'];
  return (
    <div className="h-[51px] shrink-0 flex bg-[#f7f9f8] text-[24px] text-[#1a1a1a]">
      <div className="w-[1415px] shrink-0 pl-[36px]">
        <div className="grid grid-cols-[153px_115px_131px_156px_120px_108px_159px_131px_181px_125px] h-full items-center pt-[3px]">
          {tabs.map(t => <span key={t}>{t}</span>)}
        </div>
      </div>
      <div className="w-[123px] h-full rounded-[6px] border-2 border-[#e0e0e0] bg-white flex items-center justify-center pt-[3px]">Table</div>
      <div className="ml-[42px] w-[163px] h-full rounded-[6px] border-2 border-[#e0e0e0] bg-white flex items-center justify-center pt-[3px]">Graphics</div>
      <div className="ml-[42px] w-[502px] h-full rounded-[6px] border-2 border-[#e0e0e0] bg-white grid grid-cols-[220px_164px_1fr] pl-[33px] items-center pt-[3px]">
        <span>Feature Layer</span>
        <span>Labeling</span>
        <span>Data</span>
      </div>
    </div>
  );
}

export default function App() {
  return (
    <div className="w-[3072px] h-[1838px] flex flex-col overflow-hidden bg-[#ebebeb] font-['Open_Sans','Noto_Sans',sans-serif]">
      <TopBar />
      <RibbonTabs />
      <div className="h-[2px] shrink-0 bg-[#c8c8cc]" />
      <div className="h-[1697px] shrink-0 flex pt-[12px] pl-[12px] gap-[14px]">
        <ContentsPane />
        <div className="w-[1670px] shrink-0 flex flex-col">
          <MapPane />
          <TablePane />
        </div>
        <GeoprocessingPane />
      </div>
      <div className="mt-[13px] h-[2px] shrink-0 bg-[#c8c8c8]" />
      <div className="flex-1 bg-[#eeeeee]" />
    </div>
  );
}
